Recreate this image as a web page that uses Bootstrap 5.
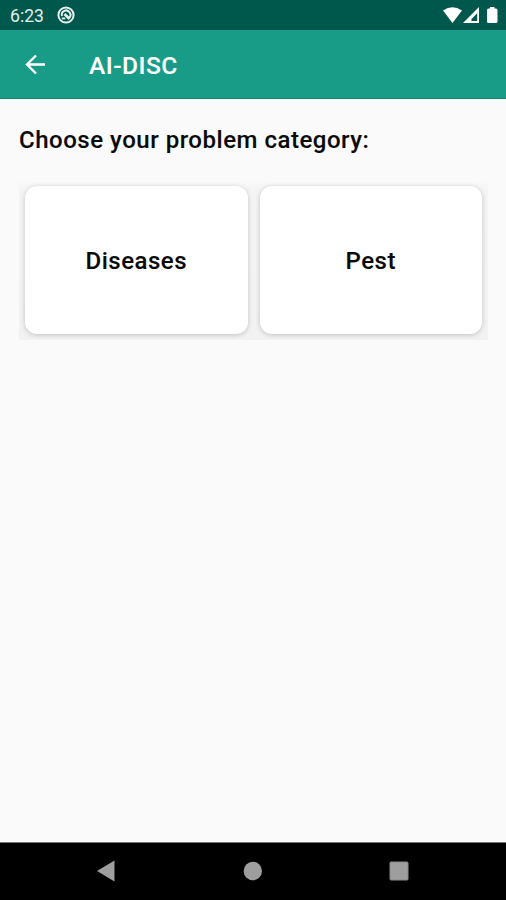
<!DOCTYPE html>
<html lang="en">
<head>
<meta charset="utf-8">
<meta name="viewport" content="width=device-width, initial-scale=1">
<title>AI-DISC</title>
<link href="https://cdn.jsdelivr.net/npm/bootstrap@5.3.0/dist/css/bootstrap.min.css" rel="stylesheet">
<style>
  body { font-family: Roboto, "Liberation Sans", sans-serif; background: #fafafa; color: #0a0a0a; height: 900px; overflow: hidden; }
  svg { display: block; flex: none; }
  .status-bar { height: 30px; background: #00574b; padding: 0 8px 0 10px; }
  .clock { font-size: 17.6px; line-height: 30px; color: #e3eeec; width: 47px; padding-top: 1px; }
  .app-bar { height: 69px; background: #189c88; border-bottom: 1px solid #128572; padding: 0 25px; }
  .app-title { font-size: 24.5px; line-height: 32px; font-weight: 500; letter-spacing: .5px; margin-left: 44px; padding-top: 3px; -webkit-text-stroke: .1px; }
  .prompt { font-size: 24px; line-height: 32px; font-weight: 500; letter-spacing: .52px; margin: 25px 0 24px; white-space: nowrap; -webkit-text-stroke: .1px; }
  main { padding: 0 18px 0 19px; }
  .choices { padding: 6px; gap: 12px; overflow: hidden; background: linear-gradient(#fafafa, #f4f4f4 12px, #f2f2f2); }
  .choice { height: 148px; border: 0; border-radius: 12px; font-size: 24px; font-weight: 500; letter-spacing: .5px; color: #0a0a0a; box-shadow: 0 1px 5px rgba(0,0,0,.2); padding: 6px 12px 4px; -webkit-text-stroke: .1px; }
  .nav-keys { height: 58px; background: #000; border-top: 1px solid #777; padding: 0 97px 2px 96px; }
</style>
</head>
<body class="d-flex flex-column">
  <div class="status-bar d-flex align-items-center">
    <span class="clock">6:23</span>
    <svg width="18" height="18" viewBox="0 0 18 18" fill="none" stroke="#e6f1ef">
      <circle cx="9" cy="9" r="7.6" stroke-width="2"/>
      <path d="M5 10A4.300 4.300 0 1 1 12 12" stroke-width="2"/>
      <path d="M7.500 8 12.500 13" stroke-width="2.600"/>
      <path d="M4.800 12.400h3.500" stroke-width="1.800"/>
    </svg>
    <svg class="ms-auto" width="55" height="18" viewBox="0 0 55 18" fill="#fff">
      <path d="M0 4.500Q9.500-1.800 19 4.500L9.500 17Z"/>
      <path fill-rule="evenodd" d="M36 1V17H20ZM34.200 7.200l-5.700 5.800v2h5.700Z"/>
      <path d="M47 1h4.500v1.500H53q1.500 0 1.500 1.500v11.500q0 1.500-1.500 1.500h-7.500Q44 17 44 15.500V4q0-1.500 1.500-1.500H47Z"/>
    </svg>
  </div>
  <header class="app-bar d-flex align-items-center text-white">
    <svg width="20" height="20" viewBox="0 0 20 20" fill="none" stroke="#fff" stroke-width="2.3"><path d="M20 10.500H2M11 1.500 2 10.500l9 9"/></svg>
    <h1 class="app-title mb-0">AI-DISC</h1>
  </header>
  <main class="flex-grow-1">
    <h2 class="prompt">Choose your problem category:</h2>
    <div class="choices d-flex">
      <button type="button" class="choice btn bg-white flex-fill w-50">Diseases</button>
      <button type="button" class="choice btn bg-white flex-fill w-50">Pest</button>
    </div>
  </main>
  <nav class="nav-keys d-flex align-items-center justify-content-between">
    <svg width="19" height="22" viewBox="0 0 19 22" fill="#9e9e9e"><path d="M1 11 18.500.500v21Z"/></svg>
    <svg width="20" height="20" viewBox="0 0 20 20" fill="#9e9e9e"><circle cx="10.800" cy="10" r="9.200"/></svg>
    <svg width="20" height="20" viewBox="0 0 20 20"><rect x="1" y="1" width="18" height="18" rx="1" fill="#9e9e9e" stroke="#8a8a8a"/></svg>
  </nav>
<script src="https://cdn.jsdelivr.net/npm/bootstrap@5.3.0/dist/js/bootstrap.bundle.min.js"></script>
</body>
</html>
